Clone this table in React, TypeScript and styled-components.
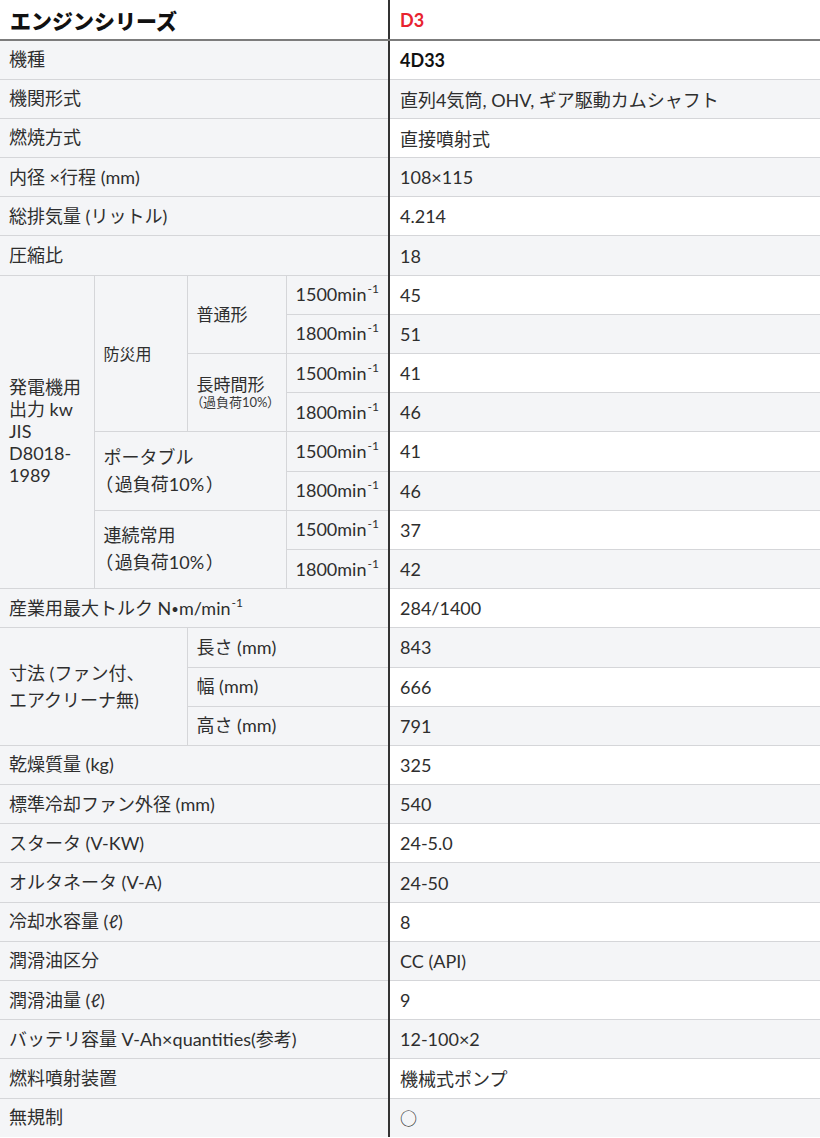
import styled, { createGlobalStyle } from 'styled-components';

const GlobalStyle = createGlobalStyle`
  body {
    margin: 0;
    background: #ffffff;
  }
`;

const Table = styled.table`
  width: 820px;
  border-collapse: collapse;
  border-style: hidden;
  table-layout: fixed;
  font-family: Lato, 'Noto Sans CJK JP', sans-serif;
  font-size: 18px;
  color: #2e2e2e;
  tr {
    height: 39.2px;
  }
`;

const HeadRow = styled.tr`
  && {
    height: 40px;
  }
`;

const HeadLabel = styled.th`
  padding: 0 10px;
  text-align: left;
  font-size: 21px;
  font-weight: 900;
  color: #111111;
  background: #ffffff;
  border-bottom: 2px solid #7c7c7c;
`;

const HeadValue = styled.th`
  padding: 0 10px;
  text-align: left;
  font-size: 18px;
  font-weight: 700;
  color: #e8232f;
  background: #ffffff;
  border-left: 2px solid #333333;
  border-bottom: 2px solid #7c7c7c;
`;

const Label = styled.th<{ $size?: number; $lh?: number }>`
  padding: 0 9px;
  text-align: left;
  vertical-align: middle;
  font-weight: 400;
  font-size: ${(p) => p.$size ?? 18}px;
  line-height: ${(p) => p.$lh ?? 1.5};
  background: #f4f5f7;
  border: 1px solid #d5d6d9;
`;

const Value = styled.td<{ $alt?: boolean; $bold?: boolean }>`
  padding: 0 10px;
  vertical-align: middle;
  font-weight: ${(p) => (p.$bold ? 700 : 400)};
  color: ${(p) => (p.$bold ? '#111111' : '#2e2e2e')};
  background: ${(p) => (p.$alt ? '#f4f5f7' : '#ffffff')};
  border-top: 1px solid #d5d6d9;
  border-bottom: 1px solid #d5d6d9;
  border-left: 2px solid #333333;
`;

const Sup = styled.sup`
  font-size: 12px;
  line-height: 0;
  vertical-align: 8px;
  margin-left: 1px;
`;

const Dot = styled.span`
  font-size: 13px;
  vertical-align: 1px;
`;

const Circle = styled.span`
  font-family: 'Noto Sans CJK JP', sans-serif;
  font-size: 17px;
`;

const Paren = styled.span`
  font-feature-settings: 'palt';
  white-space: nowrap;
`;

const Note = styled(Paren)`
  display: block;
  font-size: 13px;
  color: #3a3a3a;
`;

const Rpm = ({ v }: { v: string }) => (
  <>
    {v}min<Sup>-1</Sup>
  </>
);

type Row = { label: string; value: React.ReactNode; bold?: boolean };

const topRows: Row[] = [
  { label: '機種', value: '4D33', bold: true },
  { label: '機関形式', value: '直列4気筒, OHV, ギア駆動カムシャフト' },
  { label: '燃焼方式', value: '直接噴射式' },
  { label: '内径 ×行程 (mm)', value: '108×115' },
  { label: '総排気量 (リットル)', value: '4.214' },
  { label: '圧縮比', value: '18' },
];

const bottomRows: Row[] = [
  { label: '乾燥質量 (kg)', value: '325' },
  { label: '標準冷却ファン外径 (mm)', value: '540' },
  { label: 'スタータ (V-KW)', value: '24-5.0' },
  { label: 'オルタネータ (V-A)', value: '24-50' },
  { label: '冷却水容量 (ℓ)', value: '8' },
  { label: '潤滑油区分', value: 'CC (API)' },
  { label: '潤滑油量 (ℓ)', value: '9' },
  { label: 'バッテリ容量 V-Ah×quantities(参考)', value: '12-100×2' },
  { label: '燃料噴射装置', value: '機械式ポンプ' },
  { label: '無規制', value: <Circle>○</Circle> },
];

const overload = '（\u2009過負荷10%\u2009）';

export default function App() {
  return (
    <>
      <GlobalStyle />
      <Table>
        <colgroup>
          <col style={{ width: 94 }} />
          <col style={{ width: 93 }} />
          <col style={{ width: 99 }} />
          <col style={{ width: 103 }} />
          <col style={{ width: 431 }} />
        </colgroup>
        <thead>
          <HeadRow>
            <HeadLabel colSpan={4}>エンジンシリーズ</HeadLabel>
            <HeadValue>D3</HeadValue>
          </HeadRow>
        </thead>
        <tbody>
          {topRows.map((r, i) => (
            <tr key={r.label}>
              <Label colSpan={4}>{r.label}</Label>
              <Value $alt={i % 2 === 1} $bold={r.bold}>
                {r.value}
              </Value>
            </tr>
          ))}

          <tr>
            <Label rowSpan={8} $lh={1.22}>
              発電機用
              <br />
              出力 kw
              <br />
              JIS
              <br />
              D8018-
              <br />
              1989
            </Label>
            <Label rowSpan={4} $size={16}>
              防災用
            </Label>
            <Label rowSpan={2} $size={17}>
              普通形
            </Label>
            <Label>
              <Rpm v="1500" />
            </Label>
            <Value>45</Value>
          </tr>
          <tr>
            <Label>
              <Rpm v="1800" />
            </Label>
            <Value $alt>51</Value>
          </tr>
          <tr>
            <Label rowSpan={2} $size={17} $lh={1.2}>
              長時間形
              <Note>（過負荷10%）</Note>
            </Label>
            <Label>
              <Rpm v="1500" />
            </Label>
            <Value>41</Value>
          </tr>
          <tr>
            <Label>
              <Rpm v="1800" />
            </Label>
            <Value $alt>46</Value>
          </tr>
          <tr>
            <Label rowSpan={2} colSpan={2}>
              ポータブル
              <br />
              <Paren>{overload}</Paren>
            </Label>
            <Label>
              <Rpm v="1500" />
            </Label>
            <Value>41</Value>
          </tr>
          <tr>
            <Label>
              <Rpm v="1800" />
            </Label>
            <Value $alt>46</Value>
          </tr>
          <tr>
            <Label rowSpan={2} colSpan={2}>
              連続常用
              <br />
              <Paren>{overload}</Paren>
            </Label>
            <Label>
              <Rpm v="1500" />
            </Label>
            <Value>37</Value>
          </tr>
          <tr>
            <Label>
              <Rpm v="1800" />
            </Label>
            <Value $alt>42</Value>
          </tr>

          <tr>
            <Label colSpan={4}>
              産業用最大トルク N<Dot>•</Dot>m/min<Sup>-1</Sup>
            </Label>
            <Value>284/1400</Value>
          </tr>
          <tr>
            <Label rowSpan={3} colSpan={2}>
              寸法 (ファン付、
              <br />
              エアクリーナ無)
            </Label>
            <Label colSpan={2}>長さ (mm)</Label>
            <Value $alt>843</Value>
          </tr>
          <tr>
            <Label colSpan={2}>幅 (mm)</Label>
            <Value>666</Value>
          </tr>
          <tr>
            <Label colSpan={2}>高さ (mm)</Label>
            <Value $alt>791</Value>
          </tr>

          {bottomRows.map((r, i) => (
            <tr key={r.label}>
              <Label colSpan={4}>{r.label}</Label>
              <Value $alt={i % 2 === 1}>{r.value}</Value>
            </tr>
          ))}
        </tbody>
      </Table>
    </>
  );
}
